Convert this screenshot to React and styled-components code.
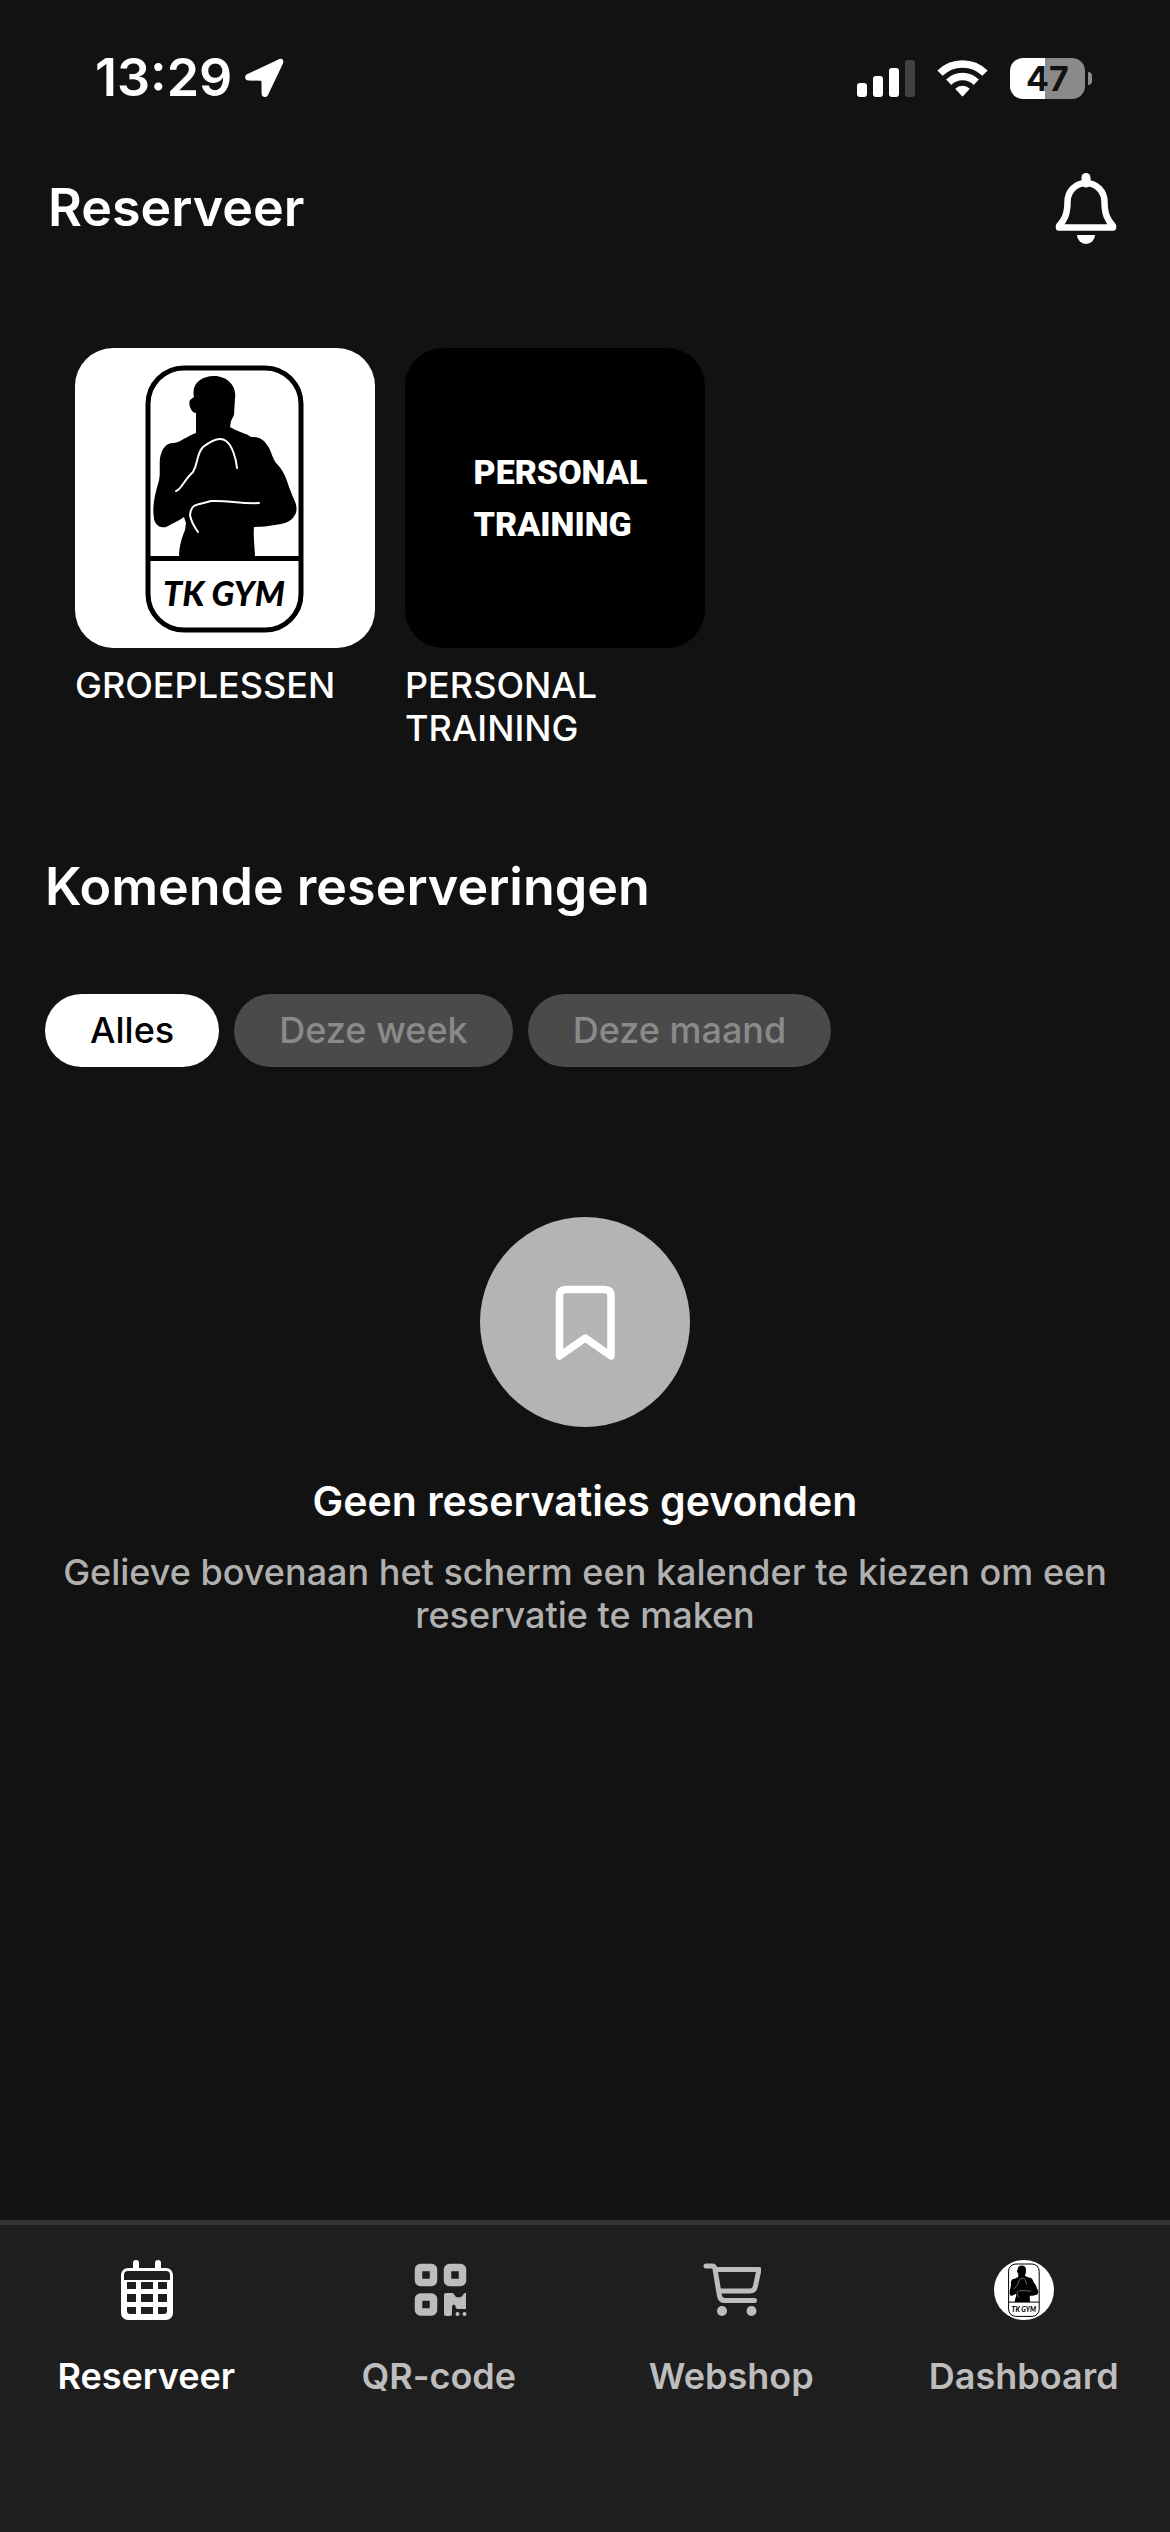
import React, { useState } from "react";
import styled, { createGlobalStyle } from "styled-components";

const GlobalStyle = createGlobalStyle`
  * { box-sizing: border-box; }
  body {
    margin: 0;
    background: #121212;
    color: #fff;
    font-family: Inter, "Open Sans", sans-serif;
    -webkit-font-smoothing: antialiased;
  }
  button { font: inherit; }
`;

const Screen = styled.div`
  min-height: 100vh;
  display: flex;
  flex-direction: column;
`;

const StatusBar = styled.div`
  display: flex;
  align-items: center;
  justify-content: space-between;
  height: 141px;
  padding: 15px 78px 0 95px;
`;

const StatusGroup = styled.div`
  display: flex;
  align-items: center;
  gap: ${(p) => p.$gap}px;
`;

const Clock = styled.time`
  font-size: 52px;
  line-height: 64px;
  font-weight: 600;
`;

const Battery = styled.div`
  display: flex;
  align-items: center;
  gap: 3px;
`;

const BatteryBody = styled.div`
  width: 75px;
  height: 41px;
  border-radius: 13px;
  background: linear-gradient(90deg, #fff 47%, #8a8a8a 47%);
  color: #121212;
  font-size: 34px;
  line-height: 41px;
  font-weight: 700;
  text-align: center;
`;

const BatteryTip = styled.div`
  width: 4px;
  height: 13px;
  border-radius: 0 6px 6px 0;
  background: #8a8a8a;
`;

const Header = styled.header`
  display: flex;
  align-items: center;
  justify-content: space-between;
  height: 132px;
  padding: 2px 53px 0 48px;
`;

const Title = styled.h1`
  margin: 0;
  font-size: 52px;
  line-height: 64px;
  font-weight: 600;
`;

const IconButton = styled.button`
  display: flex;
  padding: 0;
  border: 0;
  background: none;
  color: #fff;
  cursor: pointer;
`;

const Main = styled.main`
  flex: 1;
  display: flex;
  flex-direction: column;
  padding: 75px 45px 0;
`;

const Calendars = styled.ul`
  display: flex;
  gap: 30px;
  margin: 0;
  padding: 0 30px;
  list-style: none;
`;

const CalendarButton = styled.button`
  display: flex;
  flex-direction: column;
  gap: 16px;
  width: 300px;
  padding: 0;
  border: 0;
  background: none;
  color: #fff;
  font-size: 36px;
  line-height: 43px;
  font-weight: 500;
  text-align: left;
  cursor: pointer;
`;

const Tile = styled.span`
  display: flex;
  align-items: center;
  justify-content: center;
  width: 300px;
  height: 300px;
  border-radius: 38px;
  overflow: hidden;
  background: ${(p) => p.$background};
`;

const Poster = styled.span`
  width: 163px;
  font-family: Roboto, sans-serif;
  font-size: 34px;
  line-height: 52px;
  font-weight: 900;
  text-align: left;
`;

const SectionTitle = styled.h2`
  margin: 105px 0 0;
  font-size: 52px;
  line-height: 64px;
  font-weight: 600;
`;

const Chips = styled.div`
  display: flex;
  gap: 15px;
  margin-top: 75px;
`;

const Chip = styled.button`
  height: 73px;
  padding: 0 45px;
  border: 0;
  border-radius: 37px;
  background: ${(p) => (p.$active ? "#fff" : "#4a4a4a")};
  color: ${(p) => (p.$active ? "#000" : "#8a8a8a")};
  font-size: 36px;
  line-height: 43px;
  font-weight: 500;
  cursor: pointer;
`;

const Empty = styled.section`
  display: flex;
  flex-direction: column;
  align-items: center;
  margin-top: 150px;
  text-align: center;
`;

const EmptyBadge = styled.div`
  display: flex;
  align-items: center;
  justify-content: center;
  width: 210px;
  height: 210px;
  border-radius: 50%;
  background: #b4b4b4;
`;

const EmptyTitle = styled.h3`
  margin: 48px 0 0;
  font-size: 41px;
  line-height: 52px;
  font-weight: 600;
`;

const EmptyText = styled.p`
  margin: 24px 0 0;
  color: #b0b0b0;
  font-size: 36px;
  line-height: 43px;
  font-weight: 500;
`;

const TabBar = styled.nav`
  display: grid;
  grid-template-columns: repeat(4, 1fr);
  height: 312px;
  border-top: 5px solid #333;
  background: #1e1e1e;
`;

const Tab = styled.a`
  display: flex;
  flex-direction: column;
  align-items: center;
  gap: 35px;
  padding-top: 35px;
  color: ${(p) => (p.$active ? "#fff" : "#bdbdbd")};
  font-size: 36px;
  line-height: 43px;
  font-weight: 600;
  text-decoration: none;
`;

const Avatar = styled.span`
  display: flex;
  align-items: center;
  justify-content: center;
  width: 60px;
  height: 60px;
  border-radius: 50%;
  background: #fff;
`;

const LogoText = styled.text`
  font-family: Lato, sans-serif;
  font-size: 34px;
  font-weight: 900;
  font-style: italic;
`;

function LocationIcon() {
  return (
    <svg width="40" height="40" viewBox="0 0 40 40" fill="currentColor" aria-hidden="true">
      <path d="M35 1.2 3 16.2C0 17.8.7 22.5 4.500 22.500L16.500 22.700C17.200 22.700 17.500 23 17.500 23.700L17.600 35.500C17.600 39.500 22.500 40.300 24 37L39 5.500C40.300 2.500 38 -.1 35 1.200Z" />
    </svg>
  );
}

function SignalIcon() {
  return (
    <svg width="58" height="37" viewBox="0 0 58 37" fill="currentColor" aria-hidden="true">
      <rect x="0" y="23" width="10" height="14" rx="3" />
      <rect x="16" y="16" width="10" height="21" rx="3" />
      <rect x="32" y="8" width="10" height="29" rx="3" />
      <rect x="48" y="0" width="10" height="37" rx="3" fill="#424242" />
    </svg>
  );
}

function WifiIcon() {
  return (
    <svg width="51" height="37" viewBox="0 0 51 37" fill="none" stroke="currentColor" aria-hidden="true">
      <path d="M3 13.200A32 32 0 0 1 48 13.200" strokeWidth="7.500" />
      <path d="M11.700 22.200A19.800 19.800 0 0 1 39.300 22.200" strokeWidth="7.500" />
      <path d="M18.200 28.800A10.500 10.500 0 0 1 32.800 28.800L26.200 36Q25.500 36.800 24.800 36Z" fill="currentColor" stroke="none" />
    </svg>
  );
}

function BellIcon() {
  return (
    <svg width="62" height="71" viewBox="0 0 62 71" fill="none" aria-hidden="true">
      <path
        d="M31 10C20.500 10 12.500 18.500 12.500 29C12.500 41 9.500 47 4 53V54.500H58V53C52.500 47 49.500 41 49.500 29C49.500 18.500 41.500 10 31 10Z"
        stroke="currentColor"
        strokeWidth="6.500"
        strokeLinejoin="round"
      />
      <path d="M31 4.500V10" stroke="currentColor" strokeWidth="9" strokeLinecap="round" />
      <path d="M22 62H40A9 9 0 0 1 22 62Z" fill="currentColor" />
    </svg>
  );
}

function BookmarkIcon() {
  return (
    <svg width="60" height="75" viewBox="0 0 60 75" fill="none" aria-hidden="true">
      <path
        d="M4.500 71V11Q4.500 4.500 11 4.500H49.500Q56 4.500 56 11V71L30.300 53Z"
        stroke="#fff"
        strokeWidth="7.500"
        strokeLinejoin="round"
      />
    </svg>
  );
}

function GymLogo({ size }) {
  return (
    <svg width={size} height={size} viewBox="0 0 300 300" aria-label="TK GYM" role="img">
      <rect x="73" y="20" width="153" height="262" rx="36" fill="#fff" stroke="#000" strokeWidth="5" />
      <path d="M73 210.500H226" stroke="#000" strokeWidth="5" />
      <path
        d="M104 210C104 198 107 189 110 182L111 175L109 169C102 174 96 176 91 179C83 181 79 174 79 170C77 160 80 146 83 136C86 127 84 119 85 110C87 100 91 96 97 95C103 96 112 88 121 85L121 65C116 65 113 56 115 52L119 49C116 36 126 28 139 28C154 28 162 40 160 50L159 67L156 73L155 79C165 85 171 85 176 89C184 89 188 91 192 97C197 103 197 111 202 116C211 125 212 135 216 144C219 153 223 156 221 165C217 173 213 175 200 177C193 178 187 179 179 179C178 190 180 200 180 210Z"
        fill="#000"
      />
      <g fill="none" stroke="#fff" strokeLinecap="round">
        <path d="M101 143C106 142 109 132 118 124C124 113 121 107 128 99C137 92 145 88 151 93C157 97 161 110 162 120" strokeWidth="2" />
        <path d="M184 155C166 156 151 152 136 153C125 157 116 154 115 167C116 173 118 177 123 184" strokeWidth="2" />
      </g>
      <LogoText x="149" y="258" textAnchor="middle">
        TK GYM
      </LogoText>
    </svg>
  );
}

function CalendarIcon() {
  return (
    <svg width="60" height="60" viewBox="-1 0 60 60" aria-hidden="true">
      <path
        fillRule="evenodd"
        fill="currentColor"
        d="M11 8H49A7 7 0 0 1 56 15V53A7 7 0 0 1 49 60H11A7 7 0 0 1 4 53V15A7 7 0 0 1 11 8ZM11 11A4 4 0 0 0 7 15V20H53V15A4 4 0 0 0 49 11ZM10 22V29H19V22ZM24 22V29H36V22ZM41 22V29H50V22ZM10 34V42H19V34ZM24 34V42H36V34ZM41 34V42H50V34ZM10 47V51Q10 54 13 54H19V47ZM24 47V54H36V47ZM41 47V54H47Q50 54 50 51V47Z"
      />
      <path d="M19 3V8M41 3V8" stroke="currentColor" strokeWidth="6" strokeLinecap="round" />
    </svg>
  );
}

function QrIcon() {
  return (
    <svg width="60" height="60" viewBox="0 0 60 60" fill="none" stroke="currentColor" aria-hidden="true">
      <g strokeWidth="7.500">
        <rect x="9.500" y="7.500" width="15" height="15" rx="2" />
        <rect x="38.500" y="7.500" width="15" height="15" rx="2" />
        <rect x="9.500" y="37" width="15" height="15" rx="2" />
      </g>
      <path
        d="M37 33H43Q45 33 45.500 35Q46.500 37.500 50 37.500Q53.500 37 54.500 34Q55 33 57 33V49H49Q46.500 49 46.500 46Q46 44.500 44.500 44.500Q43 45 43 47V54Q43 56 41 56H37Q35 56 35 54V35Q35 33 37 33Z"
        fill="currentColor"
        stroke="none"
      />
      <circle cx="48.500" cy="54" r="2" fill="currentColor" stroke="none" />
      <circle cx="55.500" cy="54" r="2" fill="currentColor" stroke="none" />
    </svg>
  );
}

function CartIcon() {
  return (
    <svg width="60" height="60" viewBox="0 0 60 60" fill="none" stroke="currentColor" strokeWidth="5" strokeLinecap="round" strokeLinejoin="round" aria-hidden="true">
      <path d="M5 6H11Q13.500 6 14 9L18.500 36Q19.300 40.500 23.500 40.500H53.500" />
      <path d="M14.500 9.500H58L54.500 26Q53.500 31 49 31H18" />
      <circle cx="21" cy="51" r="5" fill="currentColor" stroke="none" />
      <circle cx="50.500" cy="51" r="5" fill="currentColor" stroke="none" />
    </svg>
  );
}

const FILTERS = ["Alles", "Deze week", "Deze maand"];

export default function App() {
  const [filter, setFilter] = useState("Alles");

  return (
    <>
      <GlobalStyle />
      <Screen>
        <StatusBar>
          <StatusGroup $gap={12}>
            <Clock>13:29</Clock>
            <LocationIcon />
          </StatusGroup>
          <StatusGroup $gap={22}>
            <SignalIcon />
            <WifiIcon />
            <Battery>
              <BatteryBody>47</BatteryBody>
              <BatteryTip />
            </Battery>
          </StatusGroup>
        </StatusBar>
        <Header>
          <Title>Reserveer</Title>
          <IconButton aria-label="Meldingen">
            <BellIcon />
          </IconButton>
        </Header>
        <Main>
          <Calendars>
            <li>
              <CalendarButton>
                <Tile $background="#fff">
                  <GymLogo size={300} />
                </Tile>
                GROEPLESSEN
              </CalendarButton>
            </li>
            <li>
              <CalendarButton>
                <Tile $background="#000">
                  <Poster>PERSONAL TRAINING</Poster>
                </Tile>
                PERSONAL TRAINING
              </CalendarButton>
            </li>
          </Calendars>
          <SectionTitle>Komende reserveringen</SectionTitle>
          <Chips>
            {FILTERS.map((name) => (
              <Chip key={name} $active={name === filter} aria-pressed={name === filter} onClick={() => setFilter(name)}>
                {name}
              </Chip>
            ))}
          </Chips>
          <Empty>
            <EmptyBadge>
              <BookmarkIcon />
            </EmptyBadge>
            <EmptyTitle>Geen reservaties gevonden</EmptyTitle>
            <EmptyText>Gelieve bovenaan het scherm een kalender te kiezen om een reservatie te maken</EmptyText>
          </Empty>
        </Main>
        <TabBar>
          <Tab href="#reserveer" $active aria-current="page">
            <CalendarIcon />
            Reserveer
          </Tab>
          <Tab href="#qr-code">
            <QrIcon />
            QR-code
          </Tab>
          <Tab href="#webshop">
            <CartIcon />
            Webshop
          </Tab>
          <Tab href="#dashboard">
            <Avatar>
              <GymLogo size={60} />
            </Avatar>
            Dashboard
          </Tab>
        </TabBar>
      </Screen>
    </>
  );
}
